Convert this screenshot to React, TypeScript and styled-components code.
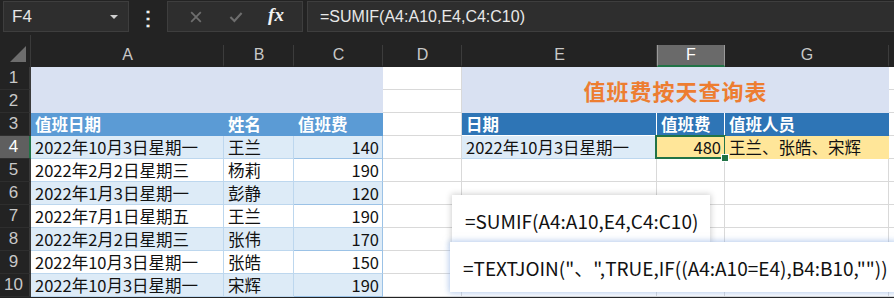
import React from "react";
import styled, { createGlobalStyle } from "styled-components";

const GlobalStyle = createGlobalStyle`
  html, body {
    margin: 0;
    padding: 0;
    background: #232323;
    overflow: hidden;
  }
  * { box-sizing: border-box; }
`;

const COLS = [31, 193, 70, 89, 79, 195, 68, 164, 5];
const COL_TEMPLATE = COLS.map((c) => `${c}px`).join(" ");
const LETTERS = ["A", "B", "C", "D", "E", "F", "G", ""];

const LEFT_ROWS = [
  ["2022年10月3日星期一", "王兰", "140"],
  ["2022年2月2日星期三", "杨莉", "190"],
  ["2022年1月3日星期一", "彭静", "120"],
  ["2022年7月1日星期五", "王兰", "190"],
  ["2022年2月2日星期三", "张伟", "170"],
  ["2022年10月3日星期一", "张皓", "150"],
  ["2022年10月3日星期一", "宋辉", "190"],
];

const App = () => {
  return (
    <Page>
      <GlobalStyle />
      <TopBar>
        <NameBox>
          <span>F4</span>
          <DropArrow />
        </NameBox>
        <Dots>⋮</Dots>
        <FormulaTools>
          <ToolIcon viewBox="0 0 20 20">
            <path d="M4 4 L16 16 M16 4 L4 16" stroke="#6e6e6e" strokeWidth="2.2" fill="none" />
          </ToolIcon>
          <ToolIcon viewBox="0 0 20 20">
            <path d="M3 10 L8 15 L17 5" stroke="#6e6e6e" strokeWidth="2.6" fill="none" />
          </ToolIcon>
          <Fx>fx</Fx>
        </FormulaTools>
        <FormulaInput>=SUMIF(A4:A10,E4,C4:C10)</FormulaInput>
      </TopBar>

      <HeaderRow>
        <Corner>
          <svg width="16" height="16" viewBox="0 0 16 16">
            <polygon points="16,0 16,16 0,16" fill="#6d6d6d" />
          </svg>
        </Corner>
        {LETTERS.map((l, i) => (
          <ColHead key={i} $active={l === "F"} $last={i === LETTERS.length - 1}>
            {l}
          </ColHead>
        ))}
      </HeaderRow>

      <Sheet>
        <Grid>
          {/* rows 1-2 */}
          <RowHead $row={1}>1</RowHead>
          <RowHead $row={2}>2</RowHead>
          <Cell $col={2} $row={1} $span={3} $rowSpan={2} $bg="#d9e1f2" $line="#d9e1f2" />
          <Cell $col={5} $row={1} />
          <Cell $col={5} $row={2} />
          <Cell $col={6} $row={1} $span={3} $rowSpan={2} $bg="#d9e1f2" $line="#d9e1f2" $center>
            <Title>值班费按天查询表</Title>
          </Cell>
          <Cell $col={9} $row={1} />
          <Cell $col={9} $row={2} />

          {/* row 3 headers */}
          <RowHead $row={3}>3</RowHead>
          <Cell $col={2} $row={3} $bg="#5b9bd5" $line="#5b9bd5" $head>值班日期</Cell>
          <Cell $col={3} $row={3} $bg="#5b9bd5" $line="#5b9bd5" $head>姓名</Cell>
          <Cell $col={4} $row={3} $bg="#5b9bd5" $line="#5b9bd5" $head>值班费</Cell>
          <Cell $col={5} $row={3} />
          <Cell $col={6} $row={3} $bg="#2e75b6" $line="#ffffff" $head>日期</Cell>
          <Cell $col={7} $row={3} $bg="#2e75b6" $line="#ffffff" $head>值班费</Cell>
          <Cell $col={8} $row={3} $bg="#2e75b6" $line="#2e75b6" $head>值班人员</Cell>
          <Cell $col={9} $row={3} />

          {/* data rows */}
          {LEFT_ROWS.map((r, i) => {
            const row = i + 4;
            const bg = i % 2 === 0 ? "#ddebf7" : "#ffffff";
            return (
              <React.Fragment key={row}>
                <RowHead $row={row} $active={row === 4}>{row}</RowHead>
                <Cell $col={2} $row={row} $bg={bg} $line="#bdd7ee">{r[0]}</Cell>
                <Cell $col={3} $row={row} $bg={bg} $line="#bdd7ee">{r[1]}</Cell>
                <Cell $col={4} $row={row} $bg={bg} $line="#9bc2e6" $right>{r[2]}</Cell>
                <Cell $col={5} $row={row} />
                {row === 4 ? (
                  <>
                    <Cell $col={6} $row={row} $bg="#ddebf7" $line="#bdd7ee">2022年10月3日星期一</Cell>
                    <Cell $col={7} $row={row} $bg="#ffe699" $line="#ffe699" $right $selected>480</Cell>
                    <Cell $col={8} $row={row} $bg="#ffe699" $line="#ffe699">王兰、张皓、宋辉</Cell>
                  </>
                ) : (
                  <>
                    <Cell $col={6} $row={row} />
                    <Cell $col={7} $row={row} />
                    <Cell $col={8} $row={row} />
                  </>
                )}
                <Cell $col={9} $row={row} />
              </React.Fragment>
            );
          })}
        </Grid>

        <Callout $left={452} $top={128} $width={258} $height={50}>
          =SUMIF(A4:A10,E4,C4:C10)
        </Callout>
        <Callout $left={450} $top={175} $width={446} $height={50} $focus>
          =TEXTJOIN("、",TRUE,IF((A4:A10=E4),B4:B10,""))
        </Callout>
      </Sheet>
    </Page>
  );
};

const Page = styled.div`
  width: 894px;
  height: 298px;
  background: #232323;
  font-family: "Noto Sans CJK SC", "Noto Sans", sans-serif;
  overflow: hidden;
`;

const TopBar = styled.div`
  height: 35px;
  background: #232323;
  display: flex;
  align-items: flex-start;
  padding: 1px 0 0 3px;
`;

const NameBox = styled.div`
  width: 126px;
  height: 31px;
  background: #2e2e2e;
  border: 1px solid #3e3e3e;
  color: #e6e6e6;
  font-family: "Liberation Sans", sans-serif;
  font-size: 17px;
  display: flex;
  align-items: center;
  justify-content: space-between;
  padding: 0 10px 0 8px;
`;

const DropArrow = styled.span`
  width: 0;
  height: 0;
  border-left: 4px solid transparent;
  border-right: 4px solid transparent;
  border-top: 4px solid #cfcfcf;
`;

const Dots = styled.div`
  width: 38px;
  height: 31px;
  color: #f0f0f0;
  font-size: 20px;
  font-weight: 700;
  line-height: 31px;
  text-align: center;
  overflow: hidden;
`;

const FormulaTools = styled.div`
  width: 136px;
  height: 31px;
  background: #2e2e2e;
  border: 1px solid #3e3e3e;
  display: flex;
  align-items: center;
  justify-content: space-around;
  padding: 0 6px 0 8px;
`;

const ToolIcon = styled.svg`
  width: 16px;
  height: 16px;
`;

const Fx = styled.span`
  font-family: "Liberation Serif", serif;
  font-style: italic;
  font-weight: 700;
  font-size: 19px;
  color: #f2f2f2;
  margin-top: -3px;
`;

const FormulaInput = styled.div`
  flex: 1;
  height: 31px;
  margin-left: 4px;
  background: #2e2e2e;
  border: 1px solid #3e3e3e;
  border-right: none;
  color: #e8e8e8;
  font-family: "Liberation Sans", sans-serif;
  font-size: 16px;
  display: flex;
  align-items: center;
  padding-left: 12px;
`;

const HeaderRow = styled.div`
  height: 32px;
  background: #232323;
  display: grid;
  grid-template-columns: ${COL_TEMPLATE};
`;

const Corner = styled.div`
  border-right: 1px solid #3a3a3a;
  display: flex;
  align-items: flex-end;
  justify-content: flex-end;
  padding: 0 4px 5px 0;
`;

const ColHead = styled.div<{ $active?: boolean; $last?: boolean }>`
  margin-top: 10px;
  background: ${(p) => (p.$active ? "#6a6a6a" : "#232323")};
  border-left: 1px solid ${(p) => (p.$active ? "#9a9a9a" : "transparent")};
  border-right: 1px solid ${(p) => (p.$active ? "#9a9a9a" : p.$last ? "transparent" : "#3c3c3c")};
  border-bottom: 2px solid ${(p) => (p.$active ? "#217346" : "#232323")};
  color: ${(p) => (p.$active ? "#ffffff" : "#c8c8c8")};
  font-family: "Liberation Sans", sans-serif;
  font-size: 16px;
  display: flex;
  align-items: center;
  justify-content: center;
`;

const Sheet = styled.div`
  position: relative;
  background: #ffffff;
`;

const Grid = styled.div`
  display: grid;
  grid-template-columns: ${COL_TEMPLATE};
  grid-template-rows: repeat(10, 23px);
`;

const RowHead = styled.div<{ $row: number; $active?: boolean }>`
  grid-column: 1;
  grid-row: ${(p) => p.$row};
  background: ${(p) => (p.$active ? "#5f5f5f" : "#232323")};
  border-right: 2px solid ${(p) => (p.$active ? "#217346" : "#3a3a3a")};
  border-bottom: 1px solid #2e2e2e;
  color: ${(p) => (p.$active ? "#ffffff" : "#c8c8c8")};
  font-family: "Liberation Sans", sans-serif;
  font-size: 17px;
  display: flex;
  align-items: center;
  justify-content: center;
  padding-right: 2px;
`;

type CellProps = {
  $col: number;
  $row: number;
  $span?: number;
  $rowSpan?: number;
  $bg?: string;
  $line?: string;
  $right?: boolean;
  $center?: boolean;
  $head?: boolean;
  $selected?: boolean;
};

const Cell = styled.div<CellProps>`
  position: relative;
  grid-column: ${(p) => p.$col} / span ${(p) => p.$span || 1};
  grid-row: ${(p) => p.$row} / span ${(p) => p.$rowSpan || 1};
  background: ${(p) => p.$bg || "#ffffff"};
  border-right: 1px solid ${(p) => p.$line || "#d9d9d9"};
  border-bottom: 1px solid ${(p) => (p.$bg && p.$bg !== "#ffffff" ? p.$line : p.$line ? "#bdd7ee" : "#d9d9d9")};
  color: ${(p) => (p.$head ? "#ffffff" : "#111111")};
  font-size: 16.5px;
  font-weight: ${(p) => (p.$head ? 700 : 400)};
  line-height: 22px;
  white-space: nowrap;
  display: flex;
  align-items: center;
  justify-content: ${(p) => (p.$right ? "flex-end" : p.$center ? "center" : "flex-start")};
  padding: 0 3px 0 4px;
  ${(p) =>
    p.$selected &&
    `
    &::after {
      content: "";
      position: absolute;
      left: -2px;
      top: -1px;
      right: -2px;
      bottom: -1px;
      border: 2px solid #217346;
    }
    &::before {
      content: "";
      position: absolute;
      right: -5px;
      bottom: -4px;
      width: 6px;
      height: 6px;
      background: #217346;
      border: 1px solid #ffffff;
      z-index: 2;
    }
  `}
`;

const Title = styled.span`
  color: #ed7d31;
  font-size: 22px;
  font-weight: 700;
  letter-spacing: 1px;
`;

const Callout = styled.div<{ $left: number; $top: number; $width: number; $height: number; $focus?: boolean }>`
  position: absolute;
  left: ${(p) => p.$left}px;
  top: ${(p) => p.$top}px;
  width: ${(p) => p.$width}px;
  height: ${(p) => p.$height}px;
  background: #ffffff;
  box-shadow: ${(p) =>
    p.$focus
      ? "0 0 6px 1px rgba(120, 160, 220, 0.55)"
      : "0 0 6px 1px rgba(0, 0, 0, 0.18)"};
  font-family: "Noto Sans CJK SC", "Noto Sans", sans-serif;
  font-size: 19px;
  color: #111111;
  display: flex;
  align-items: center;
  padding-left: 13px;
  white-space: nowrap;
`;

export default App;
